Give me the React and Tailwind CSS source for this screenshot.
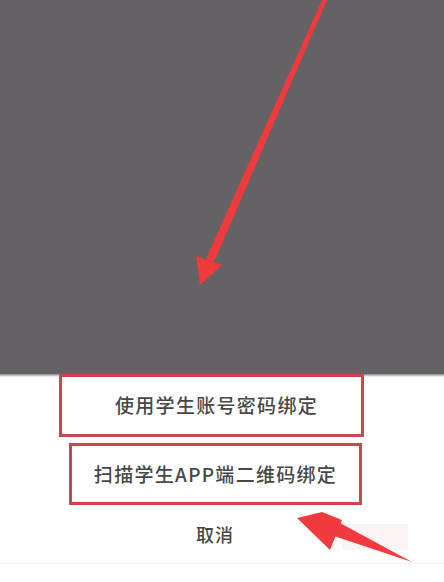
import React from 'react';

const cjk = { fontFamily: '"Noto Sans CJK SC", "Noto Sans", sans-serif' };

function Arrows() {
  return (
    <svg className="absolute inset-0 pointer-events-none" width="444" height="582" viewBox="0 0 444 582">
      {/* long arrow from top */}
      <path d="M322 0 L327 0 L214 262 L206 259 Z" fill="#f03a3e" />
      <path d="M196 256 L222 265 L200 285 Z" fill="#f03a3e" />
      {/* short arrow pointing at cancel */}
      <path d="M412 562 L340 523 L331 535 Z" fill="#f03a3e" />
      <path d="M297 518 L322 512 L342 520 L330 550 Z" fill="#f03a3e" />
    </svg>
  );
}

export default function App() {
  return (
    <div className="relative w-[444px] h-[582px] overflow-hidden bg-white" style={cjk}>
      <div className="h-[374px] bg-[#646264]" />
      <div className="h-[3px] bg-gradient-to-b from-[#8a888a] to-white" />

      <div className="flex flex-col">
        <div className="-mt-[3px] ml-[59px] w-[305px] h-[63px] border-[3px] border-[#cc474b] flex items-center justify-center pl-[10px]">
          <span className="text-[19px] tracking-[1.3px] text-[#474747] font-medium">使用学生账号密码绑定</span>
        </div>
        <div className="mt-[6px] ml-[69px] w-[293px] h-[62px] border-[3px] border-[#cc474b] flex items-center justify-center">
          <span className="text-[19px] tracking-[1.3px] text-[#474747] font-medium">扫描学生APP端二维码绑定</span>
        </div>
        <div className="h-[58px] flex items-center justify-center pr-[14px]">
          <span className="text-[18px] tracking-[1px] text-[#474747] font-medium">取消</span>
        </div>
        <div className="h-px bg-[#f1f1f1]" />
      </div>

      <div className="absolute left-[342px] top-[524px] w-[66px] h-[26px] bg-[#f6eced] opacity-60" />
      <Arrows />
    </div>
  );
}
